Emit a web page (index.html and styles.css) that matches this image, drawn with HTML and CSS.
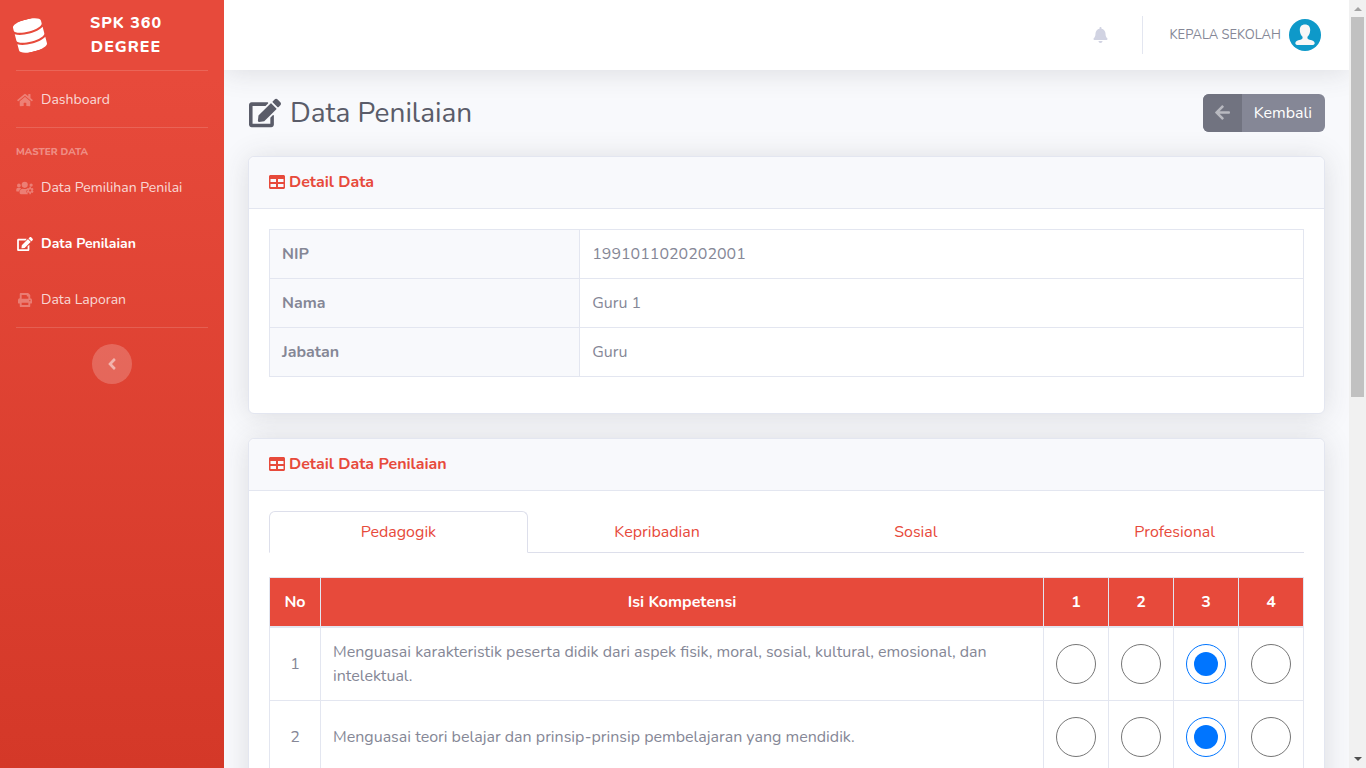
FILE: index.html
```html
<!DOCTYPE html>
<html lang="id">
<head>
<meta charset="utf-8">
<title>Data Penilaian</title>
<link rel="stylesheet" href="styles.css">
</head>
<body>
<svg class="defs" aria-hidden="true">
<symbol id="home" viewBox="0 0 576 512"><path d="M280.37 148.26L96 300.11V464a16 16 0 0 0 16 16l112.06-.29a16 16 0 0 0 15.92-16V368a16 16 0 0 1 16-16h64a16 16 0 0 1 16 16v95.64a16 16 0 0 0 16 16.05L464 480a16 16 0 0 0 16-16V300L295.67 148.26a12.19 12.19 0 0 0-15.3 0zM571.6 251.47L488 182.56V44.05a12 12 0 0 0-12-12h-56a12 12 0 0 0-12 12v72.61L318.47 43a48 48 0 0 0-61 0L4.34 251.47a12 12 0 0 0-1.6 16.9l25.5 31A12 12 0 0 0 45.15 301l235.22-193.74a12.19 12.19 0 0 1 15.3 0L530.9 301a12 12 0 0 0 16.9-1.6l25.5-31a12 12 0 0 0-1.7-16.93z"/></symbol>
<symbol id="edit" viewBox="0 0 576 512"><path d="M402.6 83.2l90.2 90.2c3.8 3.8 3.8 10 0 13.8L274.4 405.6l-92.8 10.3c-12.4 1.4-22.9-9.1-21.5-21.5l10.3-92.8L388.8 83.2c3.8-3.8 10-3.8 13.8 0zm162-22.9l-48.8-48.8c-15.2-15.2-39.9-15.2-55.2 0l-35.4 35.4c-3.8 3.8-3.8 10 0 13.8l90.2 90.2c3.8 3.8 10 3.8 13.8 0l35.4-35.4c15.2-15.3 15.2-40 0-55.2zM384 346.2V448H64V128h229.8c3.2 0 6.2-1.3 8.5-3.5l40-40c7.6-7.6 2.2-20.5-8.5-20.5H48C21.5 64 0 85.5 0 112v352c0 26.5 21.5 48 48 48h352c26.5 0 48-21.5 48-48V306.2c0-10.7-12.9-16-20.5-8.5l-40 40c-2.2 2.3-3.5 5.3-3.5 8.5z"/></symbol>
<symbol id="table" viewBox="0 0 512 512"><path d="M464 32H48C21.49 32 0 53.49 0 80v352c0 26.51 21.49 48 48 48h416c26.51 0 48-21.49 48-48V80c0-26.51-21.49-48-48-48zM224 416H48v-96h176zm0-160H48v-96h176zm240 160H288v-96h176zm0-160H288v-96h176z"/></symbol>
<symbol id="bell" viewBox="0 0 448 512"><path d="M224 512c35.32 0 63.97-28.65 63.97-64H160.03c0 35.35 28.65 64 63.97 64zm215.39-149.71c-19.32-20.76-55.47-51.99-55.47-154.29 0-77.7-54.48-139.9-127.94-155.16V32c0-17.67-14.32-32-31.98-32s-31.98 14.33-31.98 32v20.84C118.56 68.1 64.08 130.3 64.08 208c0 102.3-36.15 133.53-55.47 154.29-6 6.45-8.66 14.16-8.61 21.71.11 16.4 12.98 32 32.1 32h383.8c19.12 0 32-15.6 32.1-32 .05-7.55-2.61-15.27-8.61-21.71z"/></symbol>
<symbol id="arrow" viewBox="0 0 448 512"><path d="M257.5 445.1l-22.2 22.2c-9.4 9.4-24.6 9.4-33.9 0L7 273c-9.4-9.4-9.4-24.6 0-33.9L201.4 44.7c9.4-9.4 24.6-9.4 33.9 0l22.2 22.2c9.5 9.5 9.3 25-.4 34.3L136.6 216H424c13.3 0 24 10.7 24 24v32c0 13.3-10.7 24-24 24H136.6l120.5 114.8c9.8 9.3 10 24.8.4 34.3z"/></symbol>
<symbol id="angle" viewBox="0 0 256 512"><path d="M31.7 239l136-136c9.4-9.4 24.6-9.4 33.9 0l22.6 22.6c9.4 9.4 9.4 24.6 0 33.9L127.9 256l96.4 96.4c9.4 9.4 9.4 24.6 0 33.9L201.7 409c-9.4 9.4-24.6 9.4-33.9 0l-136-136c-9.5-9.4-9.5-24.6-.1-34z"/></symbol>
<symbol id="database" viewBox="0 0 448 512"><path d="M448 73.143v45.714C448 159.143 347.667 192 224 192S0 159.143 0 118.857V73.143C0 32.857 100.333 0 224 0s224 32.857 224 73.143zM448 176v102.857C448 319.143 347.667 352 224 352S0 319.143 0 278.857V176c48.125 33.143 136.208 48.572 224 48.572S399.874 209.143 448 176zm0 160v102.857C448 479.143 347.667 512 224 512S0 479.143 0 438.857V336c48.125 33.143 136.208 48.572 224 48.572S399.874 369.143 448 336z"/></symbol>
<symbol id="print" viewBox="0 0 512 512"><path fill-rule="evenodd" d="M96 0h275l77 77v115a64 64 0 0 1 64 64v112q0 16-16 16h-48v96q0 32-32 32H96q-32 0-32-32v-96H16q-16 0-16-16V256a64 64 0 0 1 64-64V32Q64 0 96 0zM134 70v138h244v-80h-42q-16 0-16-16V70zM134 352v86h244v-86zM432 256a22 22 0 1 0 .1 0z"/></symbol>
<symbol id="users" viewBox="0 0 640 512"><circle cx="96" cy="160" r="68"/><circle cx="310" cy="140" r="112"/><circle cx="544" cy="150" r="60"/><path d="M64 250a64 64 0 0 0-64 64v38q0 32 32 32h70q14-72 75-110-18-24-45-24zM243 282c-70 0-121 51-121 121v29c0 27 22 48 48 48h255q-18-20-12-38-46-20-46-45 0-34 20-58 5-20 18-42-6-15-14-15h-14q-63 30-134 0z"/><path fill-rule="evenodd" d="M484 214h48l8 38 25 14 37-12 32 50-29 26v29l29 26-32 50-37-12-25 14-8 43h-48l-8-43-25-14-37 12-32-50 29-26v-29l-29-26 32-50 37 12 25-14zM508 304a42 42 0 1 0 .1 0z"/></symbol>
</svg>
<div class="app">
<nav class="sidebar" aria-label="Menu utama">
  <a class="brand" href="#"><svg class="brand-icon"><use href="#database"/></svg><span class="brand-text">SPK 360 Degree</span></a>
  <hr class="divider">
  <a class="nav-link" href="#"><svg class="nav-icon"><use href="#home"/></svg>Dashboard</a>
  <hr class="divider">
  <div class="heading">Master Data</div>
  <a class="nav-link" href="#"><svg class="nav-icon"><use href="#users"/></svg>Data Pemilihan Penilai</a>
  <a class="nav-link active" href="#"><svg class="nav-icon"><use href="#edit"/></svg>Data Penilaian</a>
  <a class="nav-link" href="#"><svg class="nav-icon"><use href="#print"/></svg>Data Laporan</a>
  <hr class="divider">
  <button class="toggle" aria-label="Ciutkan menu"><svg class="toggle-icon"><use href="#angle"/></svg></button>
</nav>
<div class="content">
  <header class="topbar">
    <button class="bell" aria-label="Notifikasi"><svg class="bell-icon"><use href="#bell"/></svg></button>
    <a class="user" href="#"><span>KEPALA SEKOLAH</span>
      <svg class="avatar" viewBox="0 0 32 32"><circle cx="16" cy="16" r="16" fill="#0e99c9"/><path fill="#f7f7f7" d="M16 5.500c3.500 0 5.200 2.200 5.200 5.500 0 2.800-1.200 5.400-2.700 6.700-.4 1.700.3 2.500 2 3 3.300.9 5.200 1.300 5.200 3.500 0 1.200-1.200 1.800-2.400 1.800H8.700c-1.200 0-2.400-.6-2.400-1.800 0-2.200 1.900-2.600 5.200-3.500 1.700-.5 2.400-1.300 2-3-1.500-1.300-2.700-3.900-2.700-6.700 0-3.300 1.700-5.500 5.200-5.500z"/></svg></a>
  </header>
  <main class="main">
    <div class="title-row">
      <h1 class="title"><svg class="title-icon"><use href="#edit"/></svg>Data Penilaian</h1>
      <a class="back" href="#"><span class="back-icon"><svg class="arrow"><use href="#arrow"/></svg></span><span class="back-text">Kembali</span></a>
    </div>
    <section class="card">
      <h2 class="card-header"><svg class="card-icon"><use href="#table"/></svg>Detail Data</h2>
      <div class="card-body detail-body">
        <table class="table detail">
          <tr><th scope="row">NIP</th><td>1991011020202001</td></tr>
          <tr><th scope="row">Nama</th><td>Guru 1</td></tr>
          <tr><th scope="row">Jabatan</th><td>Guru</td></tr>
        </table>
      </div>
    </section>
    <section class="card">
      <h2 class="card-header"><svg class="card-icon"><use href="#table"/></svg>Detail Data Penilaian</h2>
      <div class="card-body">
        <div class="tabs"><a class="tab selected" href="#">Pedagogik</a><a class="tab" href="#">Kepribadian</a><a class="tab" href="#">Sosial</a><a class="tab" href="#">Profesional</a></div>
        <table class="table scores">
          <thead><tr><th class="no">No</th><th>Isi Kompetensi</th><th class="score">1</th><th class="score">2</th><th class="score">3</th><th class="score">4</th></tr></thead>
          <tbody>
          <tr><td>1</td><td class="text">Menguasai karakteristik peserta didik dari aspek fisik, moral, sosial, kultural, emosional, dan intelektual.</td>
            <td><input class="radio" type="radio" name="k1" aria-label="1"></td><td><input class="radio" type="radio" name="k1" aria-label="2"></td><td><input class="radio" type="radio" name="k1" aria-label="3" checked></td><td><input class="radio" type="radio" name="k1" aria-label="4"></td></tr>
          <tr><td>2</td><td class="text">Menguasai teori belajar dan prinsip-prinsip pembelajaran yang mendidik.</td>
            <td><input class="radio" type="radio" name="k2" aria-label="1"></td><td><input class="radio" type="radio" name="k2" aria-label="2"></td><td><input class="radio" type="radio" name="k2" aria-label="3" checked></td><td><input class="radio" type="radio" name="k2" aria-label="4"></td></tr>
          </tbody>
        </table>
      </div>
    </section>
  </main>
</div>
<div class="scrollbar" aria-hidden="true"><span class="up"></span><span class="thumb"></span><span class="down"></span></div>
</div>
</body>
</html>
```
FILE: styles.css
```css
* { box-sizing: border-box; }
body { margin: 0; font: 400 16px/24px Nunito, Lato, "Open Sans", sans-serif; color: #858796; background: #f8f9fc; }
a { color: inherit; text-decoration: none; }
svg { fill: currentColor; flex: none; }
button { border: 0; padding: 0; background: none; color: inherit; cursor: pointer; }
.defs { display: none; }
.app { display: flex; height: 100vh; overflow: hidden; }

.sidebar { width: 224px; flex: none; color: rgba(255,255,255,.8); background: linear-gradient(180deg, #e74a3b 10%, #d43828 100%); }
.brand { display: flex; align-items: center; height: 70px; padding: 0 12px; color: #fff; font-weight: 800; text-transform: uppercase; letter-spacing: 1px; text-align: center; }
.brand-icon { width: 36px; height: 33px; transform: rotate(-15deg); }
.brand-text { flex: 1; padding: 0 40px 0 32px; }
.divider { height: 1px; margin: 0 16px; border: 0; background: rgba(255,255,255,.15); }
.nav-link { display: flex; align-items: center; gap: 7px; height: 56px; padding: 1px 16px 0; font-size: 14px; }
.nav-icon { width: 18px; height: 14px; color: rgba(255,255,255,.3); }
.active, .active .nav-icon { color: #fff; font-weight: 700; }
.heading { padding: 16px 16px 0; height: 31px; font-size: 10px; line-height: 16px; font-weight: 800; text-transform: uppercase; color: rgba(255,255,255,.4); }
.toggle { display: flex; align-items: center; justify-content: center; width: 40px; height: 40px; margin: 16px auto; border-radius: 50%; background: rgba(255,255,255,.2); color: rgba(255,255,255,.5); }
.toggle-icon { width: 10px; height: 18px; }

.content { flex: 1; min-width: 0; overflow: hidden; }
.topbar { position: relative; display: flex; justify-content: flex-end; align-items: center; height: 70px; padding: 0 28px; background: #fff; box-shadow: 0 2px 28px rgba(58,59,69,.15); }
.bell { color: #d1d3e2; padding: 0 34px; height: 38px; display: flex; align-items: center; border-right: 1px solid #e3e6f0; }
.bell-icon { width: 15px; height: 16px; }
.user { display: flex; align-items: center; gap: 8px; padding-left: 26px; font-size: 13px; }
.avatar { width: 32px; height: 32px; }

.main { padding: 24px; }
.title-row { display: flex; justify-content: space-between; align-items: center; margin-bottom: 24px; }
.title { display: flex; align-items: center; gap: 9px; margin: 0; padding-left: 1px; font-size: 28px; line-height: 34px; font-weight: 400; color: #5a5c69; }
.title-icon { width: 32px; height: 30px; }
.back { display: flex; height: 38px; border-radius: 6px; overflow: hidden; color: #fff; background: #858796; }
.back-icon { display: flex; align-items: center; padding: 0 12px 2px; background: #717380; color: rgba(255,255,255,.5); }
.arrow { width: 15px; height: 17px; }
.back-text { padding: 7px 13px 7px 12px; }

.card { margin-bottom: 24px; border: 1px solid #e3e6f0; border-radius: 6px; background: #fff; box-shadow: 0 2px 28px rgba(58,59,69,.15); }
.card-header { display: flex; align-items: center; gap: 4px; margin: 0; height: 52px; padding: 0 20px 2px; border-bottom: 1px solid #e3e6f0; border-radius: 6px 6px 0 0; background: #f8f9fc; color: #e74a3b; font-size: 16px; font-weight: 700; }
.card-icon { width: 16px; height: 16px; }
.card-body { padding: 20px; }
.detail-body { padding-bottom: 36px; }

.table { width: 100%; border-collapse: collapse; }
.table th, .table td { border: 1px solid #e3e6f0; padding: 12px; }
.detail th { width: 30%; text-align: left; background: #f8f9fc; }
.tabs { display: grid; grid-template-columns: repeat(4, 1fr); margin-bottom: 24px; border-bottom: 1px solid #dddfeb; color: #e74a3b; text-align: center; }
.tab { margin-bottom: -1px; padding: 8px 16px; border: 1px solid transparent; border-radius: 6px 6px 0 0; }
.selected { border-color: #dddfeb #dddfeb #fff; background: #fff; }
.scores { table-layout: fixed; text-align: center; }
.scores thead th { background: #e74a3b; color: #fff; border-bottom-width: 2px; }
.no { width: 51px; }
.score { width: 65px; }
.scores .text { text-align: left; }
.radio { appearance: none; display: block; width: 40px; height: 40px; margin: 4px auto; padding: 7px; border: 1px solid #767676; border-radius: 50%; }
.radio:checked { border-color: #0075ff; background: #0075ff content-box; }

.scrollbar { display: flex; flex-direction: column; align-items: center; justify-content: space-between; width: 17px; flex: none; background: #f1f1f1; }
.up, .down { width: 0; height: 0; border: 4px solid transparent; }
.up { margin-top: 3px; border-bottom-color: #a3a3a3; }
.down { margin-bottom: 3px; border-top-color: #505050; }
.thumb { width: 13px; height: 380px; margin: 6px 0 auto; background: #c1c1c1; }
```
